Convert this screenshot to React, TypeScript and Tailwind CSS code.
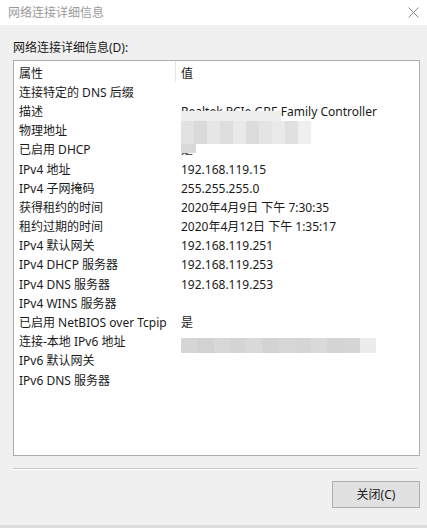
const rows: [string, string][] = [
  ["连接特定的 DNS 后缀", ""],
  ["描述", "Realtek PCIe GBE Family Controller"],
  ["物理地址", ""],
  ["已启用 DHCP", "是"],
  ["IPv4 地址", "192.168.119.15"],
  ["IPv4 子网掩码", "255.255.255.0"],
  ["获得租约的时间", "2020年4月9日 下午 7:30:35"],
  ["租约过期的时间", "2020年4月12日 下午 1:35:17"],
  ["IPv4 默认网关", "192.168.119.251"],
  ["IPv4 DHCP 服务器", "192.168.119.253"],
  ["IPv4 DNS 服务器", "192.168.119.253"],
  ["IPv4 WINS 服务器", ""],
  ["已启用 NetBIOS over Tcpip", "是"],
  ["连接-本地 IPv6 地址", ""],
  ["IPv6 默认网关", ""],
  ["IPv6 DNS 服务器", ""],
];

// mosaic used to hide the MAC / IPv6 values
const macCells = ["#e2e2e2", "#dadada", "#e6e6e6", "#dedede", "#e9e9e9", "#dcdcdc", "#e4e4e4", "#eaeaea", "#e0e0e0", "#efefef"];
const ipCells = ["#d6d6d6", "#d2d2d2", "#d8d8d8", "#d4d4d4", "#d9d9d9", "#d3d3d3", "#d7d7d7", "#d5d5d5", "#dadada", "#d4d4d4", "#d6d6d6", "#ececec"];

export default function App() {
  return (
    <div
      className="w-[427px] h-[528px] bg-[#f0f0f0] flex flex-col border-b-[3px] border-[#dcdcdc] text-[12px] text-[#1a1a1a]"
      style={{ fontFamily: '"Noto Sans", "Noto Sans CJK SC", sans-serif' }}
    >
      {/* title bar */}
      <div className="h-[25px] bg-white flex items-center justify-between pl-[8px] pr-[7px] shrink-0">
        <span className="text-[#9a9a9a] text-[12px] leading-[16px]">网络连接详细信息</span>
        <svg width="11" height="11" viewBox="0 0 11 11" className="mr-[1px]">
          <path d="M0.5 0.5 L10.5 10.5 M10.5 0.5 L0.5 10.5" stroke="#8a8a8a" strokeWidth="1" fill="none" />
        </svg>
      </div>

      <div className="px-[13px] pt-[15px] leading-[16px]">网络连接详细信息(D):</div>

      <div className="relative ml-[13px] mt-[4px] w-[407px] h-[396px] bg-white border border-[#adadad] pt-[3px] pl-[5px]">
        <div className="relative flex h-[19.2px] items-center">
          <div className="w-[162px]">属性</div>
          <div>值</div>
          <div className="absolute left-[156px] top-[-3px] h-[21px] w-px bg-[#e5e5e5]" />
        </div>
        {rows.map(([k, v]) => (
          <div key={k} className="flex h-[19.2px] items-center whitespace-nowrap">
            <div className="w-[162px] shrink-0">{k}</div>
            <div>{v}</div>
          </div>
        ))}

        {/* blurred physical address */}
        <div className="absolute left-[167px] top-[50px] w-[100px] h-[10px] bg-[#eeeeee]" />
        <div className="absolute left-[167px] top-[60px] w-[130px] h-[23px] flex">
          {macCells.map((c, i) => (
            <div key={i} className="flex-1" style={{ backgroundColor: c }} />
          ))}
        </div>
        <div className="absolute left-[167px] top-[83px] w-[15px] h-[9px] bg-[#d9d9d9]" />

        {/* blurred IPv6 link-local address */}
        <div className="absolute left-[167px] top-[277px] w-[195px] h-[15px] flex">
          {ipCells.map((c, i) => (
            <div key={i} className="flex-1" style={{ backgroundColor: c }} />
          ))}
        </div>
      </div>

      <div className="ml-[13px] mt-[12px] w-[404px] h-[2px] border-t border-[#c8c8c8] border-b border-b-white" />

      <div className="flex justify-end pr-[7px] mt-[11px]">
        <button className="w-[88px] h-[27px] bg-[#e1e1e1] border border-[#adadad] text-[12px] text-[#1a1a1a]">
          关闭(C)
        </button>
      </div>
    </div>
  );
}
